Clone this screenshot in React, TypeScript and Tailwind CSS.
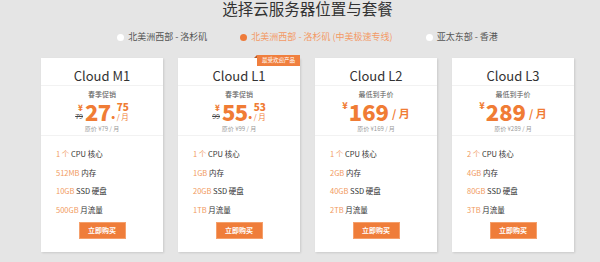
const FONT = { fontFamily: '"Noto Sans CJK SC", "Noto Sans", sans-serif' };

type Plan = {
  name: string;
  tag: string;
  yen: string;
  cents?: string;
  old?: string;
  orig: string;
  cpu: string;
  ram: string;
  disk: string;
  traffic: string;
  hot?: boolean;
};

const plans: Plan[] = [
  { name: "Cloud M1", tag: "春季促销", yen: "27", cents: "75", old: "79", orig: "79", cpu: "1 个", ram: "512MB", disk: "10GB", traffic: "500GB" },
  { name: "Cloud L1", tag: "春季促销", yen: "55", cents: "53", old: "99", orig: "99", cpu: "1 个", ram: "1GB", disk: "20GB", traffic: "1TB", hot: true },
  { name: "Cloud L2", tag: "最低到手价", yen: "169", orig: "169", cpu: "1 个", ram: "2GB", disk: "40GB", traffic: "2TB" },
  { name: "Cloud L3", tag: "最低到手价", yen: "289", orig: "289", cpu: "2 个", ram: "4GB", disk: "80GB", traffic: "3TB" },
];

const regions = [
  { label: "北美洲西部 - 洛杉矶", active: false },
  { label: "北美洲西部 - 洛杉矶 (中美极速专线)", active: true },
  { label: "亚太东部 - 香港", active: false },
];

function Price({ p }: { p: Plan }) {
  if (p.cents) {
    return (
      <div className="flex items-end justify-center h-[20px] font-extrabold text-[#f07c35]">
        <div className="flex flex-col items-end mr-[2px]">
          <span className="text-[8px] leading-[9px]">¥</span>
          <span className="text-[7px] leading-[9px] font-normal text-[#444] line-through">{p.old}</span>
        </div>
        <span className="text-[22px] leading-[20px] tracking-[-0.5px]">{p.yen}</span>
        <span className="text-[14px] leading-[15px]">.</span>
        <div className="flex flex-col items-start ml-[1px]">
          <span className="text-[10px] leading-[11px]">{p.cents}</span>
          <span className="text-[7.5px] leading-[9px] font-normal">/ 月</span>
        </div>
      </div>
    );
  }
  return (
    <div className="flex items-end justify-center h-[20px] font-extrabold text-[#f07c35]">
      <span className="text-[9px] leading-[9px] self-start mr-[1px]">¥</span>
      <span className="text-[22px] leading-[20px]">{p.yen}</span>
      <span className="text-[11px] leading-[15px] ml-[3px] font-bold">/ 月</span>
    </div>
  );
}

function Card({ p }: { p: Plan }) {
  return (
    <div className="relative w-[122px] bg-white shadow-[1px_1px_2px_rgba(0,0,0,0.12)]">
      {p.hot && (
        <div className="absolute right-0 top-[-3px] h-[11px] px-[5px] bg-[#f07f3e] text-white text-[5.5px] leading-[11px]">
          最受欢迎产品
          <span className="absolute left-[-3px] top-0 w-0 h-0 border-l-[3px] border-l-transparent border-b-[3px] border-b-[#b95a25]" />
        </div>
      )}
      <div className="h-[28px] pt-[10px] text-center text-[13px] leading-[16px] text-[#333] border-b border-[#f2f2f2]">
        {p.name}
      </div>
      <div className="pt-[4px] h-[50px] text-center border-b border-[#f2f2f2]">
        <div className="text-[7px] leading-[9px] text-[#555]">{p.tag}</div>
        <div className="mt-[2px]">
          <Price p={p} />
        </div>
        <div className="mt-[4px] text-[6px] leading-[8px] text-[#999]">原价 ¥{p.orig} / 月</div>
      </div>
      <div className="pl-[15px] pt-[9px] text-[7.5px] leading-[18.6px] text-[#333]">
        <div><span className="text-[#f19a60]">{p.cpu}</span> CPU 核心</div>
        <div><span className="text-[#f19a60]">{p.ram}</span> 内存</div>
        <div><span className="text-[#f19a60]">{p.disk}</span> SSD 硬盘</div>
        <div><span className="text-[#f19a60]">{p.traffic}</span> 月流量</div>
      </div>
      <div className="flex justify-center pt-[3px] pb-[13px]">
        <button className="w-[47px] h-[17px] bg-[#ef7d3a] border border-[#f5a06c] text-white font-bold text-[7px] leading-[15px]">
          立即购买
        </button>
      </div>
    </div>
  );
}

export default function App() {
  return (
    <div className="w-[600px] h-[262px] bg-[#e5e5e5] pl-[15px] overflow-hidden" style={FONT}>
      <h1 className="pt-[1px] text-center text-[15.5px] leading-[15px] text-[#333] font-normal">
        选择云服务器位置与套餐
      </h1>
      <div className="flex justify-center gap-[33px] mt-[16px] h-[10px]">
        {regions.map((r) => (
          <div key={r.label} className="flex items-center gap-[4px]">
            <span className={`w-[7px] h-[7px] rounded-full ${r.active ? "bg-[#ee7b3a]" : "bg-white"}`} />
            <span className={`text-[9px] leading-[10px] ${r.active ? "text-[#f39a66]" : "text-[#555]"}`}>{r.label}</span>
          </div>
        ))}
      </div>
      <div className="flex justify-center gap-[15px] mt-[16px]">
        {plans.map((p) => (
          <Card key={p.name} p={p} />
        ))}
      </div>
    </div>
  );
}
